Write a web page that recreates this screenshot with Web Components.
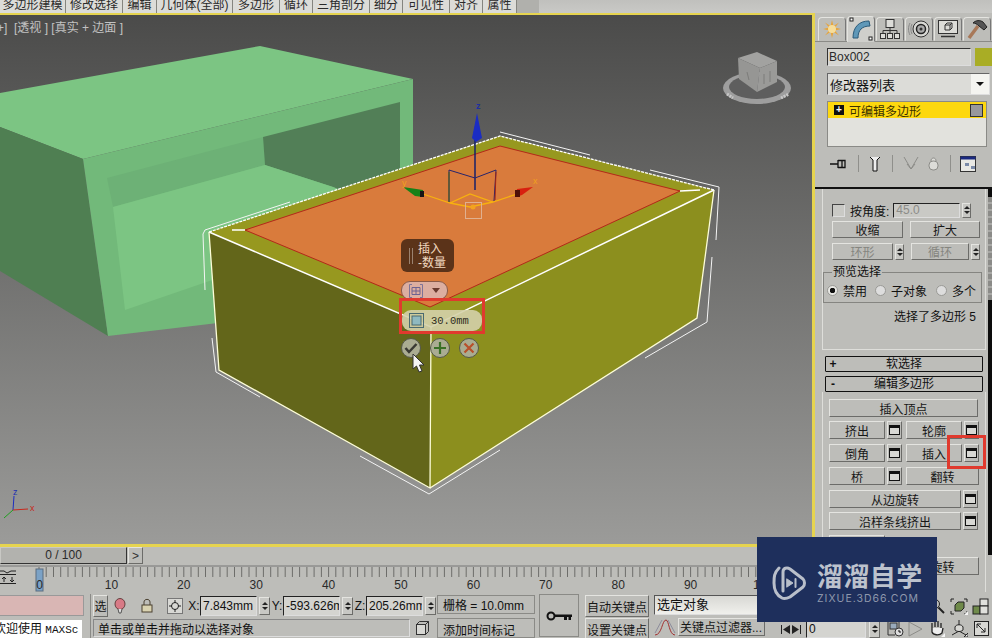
<!DOCTYPE html>
<html>
<head>
<meta charset="utf-8">
<style>
  html, body { margin: 0; height: 638px; overflow: hidden; background: #bdbdb9; }
  body { font: 12px "Liberation Sans", "Noto Sans CJK SC", sans-serif; color: #111; }
  #app { display: grid; grid-template-columns: 815px 177px; grid-template-rows: 13px 579px 46px; width: 992px; height: 638px; position: relative; overflow: hidden; }
  ribbon-tabs { grid-column: 1 / 3; }
  status-bar { grid-column: 1 / 3; }
</style>
</head>
<body>
<div id="app">
  <ribbon-tabs></ribbon-tabs>
  <div id="left" style="display:flex;flex-direction:column;min-width:0">
    <scene-view></scene-view>
    <time-line></time-line>
  </div>
  <command-panel></command-panel>
  <status-bar></status-bar>
  <zixue-mark></zixue-mark>
</div>

<script>
class MxBtn extends HTMLElement {
  constructor() {
    super();
    this.attachShadow({ mode: "open" }).innerHTML = `
    <style>
      :host { display: flex; align-items: center; justify-content: center; box-sizing: border-box; height: 18px;
        background: #bdbdb9; border: 1px solid; border-color: #e4e4e0 #6c6c69 #6c6c69 #e4e4e0;
        font-size: 12px; color: #161616; white-space: nowrap; overflow: hidden; flex: none; }
      :host([disabled]) { color: #85857f; }
    </style><slot></slot>`;
  }
}

class MxOpt extends HTMLElement {
  constructor() {
    super();
    this.attachShadow({ mode: "open" }).innerHTML = `
    <style>
      :host { display: flex; align-items: center; justify-content: center; box-sizing: border-box; width: 15px; height: 18px; flex: none;
        background: #bdbdb9; border: 1px solid; border-color: #e4e4e0 #6c6c69 #6c6c69 #e4e4e0; }
      i { display: block; box-sizing: border-box; width: 11px; height: 10px; border: 1px solid #111; border-top-width: 3px; background: #d8d8d4; }
    </style><i></i>`;
  }
}

class MxSpin extends HTMLElement {
  constructor() {
    super();
    this.attachShadow({ mode: "open" }).innerHTML = `
    <style>
      :host { display: flex; flex-direction: column; box-sizing: border-box; width: 9px; height: 16px; flex: none; background: #c8c8c4;
        border: 1px solid; border-color: #e4e4e0 #6c6c69 #6c6c69 #e4e4e0; align-items: center; justify-content: center; gap: 2px; }
      i { width: 0; height: 0; border-left: 3px solid transparent; border-right: 3px solid transparent; }
      .u { border-bottom: 3px solid #222; }
      .d { border-top: 3px solid #222; }
    </style><i class="u"></i><i class="d"></i>`;
  }
}

class RolloutBar extends HTMLElement {
  constructor() {
    super();
    this.attachShadow({ mode: "open" }).innerHTML = `
    <style>
      :host { display: grid; grid-template-columns: 14px 1fr 14px; align-items: center; box-sizing: border-box; height: 16px; margin: 0 3px;
        border: 1px solid #111; border-radius: 1px; background: #bdbdb9; font-size: 12px; line-height: 14px; }
      b { text-align: center; font-size: 12px; }
      div { text-align: center; }
    </style><b></b><div><slot></slot></div><span></span>`;
    this.shadowRoot.querySelector("b").textContent = this.getAttribute("sign");
  }
}

class RibbonTabs extends HTMLElement {
  constructor() {
    super();
    const names = [["多边形建模", 66], ["修改选择", 57], ["编辑", 34], ["几何体(全部)", 76], ["多边形", 47], ["循环", 33], ["三角剖分", 57], ["细分", 33], ["可见性", 47], ["对齐", 33], ["属性", 34]];
    this.attachShadow({ mode: "open" }).innerHTML = `
    <style>
      :host { display: flex; height: 13px; overflow: hidden; background: linear-gradient(#c0c0bd, #c9c9c6); }
      span { box-sizing: border-box; display: block; height: 13px; background: #dcdcd8; border-right: 1px solid #85857f; text-align: center;
        font-size: 12px; line-height: 10px; color: #2a2a2a; white-space: nowrap; }
      .end { width: 22px; background: #b0b0ac; border: 0; }
    </style>
    ${names.map(([n, w]) => `<span style="width:${w}px">${n}</span>`).join("")}<span class="end"></span>`;
  }
}

class SceneView extends HTMLElement {
  constructor() {
    super();
    this.attachShadow({ mode: "open" }).innerHTML = `
    <style>
      :host { display: block; position: relative; box-sizing: border-box; height: 534px; overflow: hidden;
        border: solid #e6d44f; border-width: 2px 3px 3px 0; background: linear-gradient(#4b4b4a, #9b9b99); }
      .label { height: 26px; line-height: 26px; color: #c2c2c2; font-size: 12px; white-space: pre; text-indent: -3px; position: relative; }
      svg.scene { position: absolute; left: 0; top: 0; }
      svg text { font-family: "Liberation Sans", sans-serif; }
      .cursor { position: absolute; left: 412px; top: 338px; }
    </style>
    <svg class="scene" width="812" height="529" viewBox="0 15 812 529">
      <!-- back box, green -->
      <polygon points="0,93 260,46 413,79 83,159 0,127" fill="#7cc583"/>
      <polygon points="0,127 83,159 108,336 0,271" fill="#4f7f52"/>
      <polygon points="83,159 413,79 413,300 108,336" fill="#72b97a"/>
      <polygon points="107,178 263,137 265,165 113,207" fill="#6db176"/>
      <polygon points="263,137 400,102 400,215 333,187 265,165" fill="#527f57"/>
      <polygon points="113,207 265,165 333,187 400,215 300,250 125,310" fill="#7cc583"/>
      <!-- selected box -->
      <polygon points="209,232 500,136 714,190 431,327" fill="#97981f"/>
      <polygon points="245,230 500,146 680,191 430,307" fill="#d97b3c" stroke="#b3281a"/>
      <polygon points="209,232 431,327 430,488 219,370" fill="#63661a"/>
      <polygon points="714,190 431,327 430,488 697,318" fill="#8c8f1e"/>
      <g fill="none" stroke="#fff" stroke-width="1.3">
        <path d="M209,232 L431,327 L714,190" stroke-width="1.5"/>
        <path d="M431,327 L430,488 L219,370 L209,232 M430,488 L697,318 L714,190" stroke="#fdfdd8"/>
        <path d="M209,232 L500,136 L714,190" stroke-dasharray="3 1"/>
        <path d="M232,230 L245,230 M680,191 L700,190"/>
      </g>
      <g fill="none" stroke="#f4f4f4" stroke-width="1">
        <path d="M205,290 L203,234 L205,230 L290,202"/>
        <path d="M500,132 L590,155 M716,240 L719,187 L650,170"/>
        <path d="M712,257 L707,322 L645,358"/>
        <path d="M360,456 L429,494 L500,450"/>
        <path d="M212,338 L216,372 L260,397"/>
      </g>
      <!-- gizmo -->
      <path d="M475,140 V190" stroke="#16206a" stroke-width="1.5"/>
      <polygon points="477,113 472,138 476,142 482,138" fill="#1a2cc4"/>
      <text x="476" y="109" font-size="9" fill="#2030a0" font-weight="bold">z</text>
      <path d="M449,202 V170 L475,178 L496,170 L494,201" fill="none" stroke="#26246c"/>
      <path d="M449,202 V172" stroke="#44601c"/>
      <path d="M495,200 L496,172" stroke="#a12416"/>
      <path d="M423,194 L450,203 L470,194 L493,202 L517,194 M450,203 L470,207 L493,202" fill="none" stroke="#f7b10f" stroke-width="1.3"/>
      <polygon points="403,187 423,190 423,197 415,196" fill="#178118"/>
      <rect x="420" y="191" width="4" height="6" fill="#161616"/>
      <polygon points="533,187 517,189 516,197 522,195" fill="#d8200f"/>
      <rect x="515" y="190" width="5" height="7" fill="#501008"/>
      <text x="402" y="186" font-size="9" fill="#f0a020">y</text>
      <text x="533" y="184" font-size="9" fill="#f0a020">x</text>
      <rect x="465.500" y="202.500" width="16" height="16" fill="none" stroke="#e0b090"/>
      <circle cx="473" cy="207" r="2.500" fill="#f3a21f"/>
      <!-- view cube -->
      <ellipse cx="757" cy="88" rx="34" ry="16" fill="#9e9e9e"/>
      <ellipse cx="757" cy="87" rx="28" ry="12" fill="#5e5e5e"/>
      <path d="M727,94 L733,98 M781,98 L789,94" stroke="#c8c8c8" stroke-width="3" stroke-dasharray="2 1"/>
      <polygon points="738,58 757,52 777,61 760,68" fill="#a2a2a0"/>
      <polygon points="738,58 760,68 757,92 739,79" fill="#969694"/>
      <polygon points="777,61 760,68 757,92 777,82" fill="#9a9a98"/>
      <path d="M747,72 L749,80 M764,74 V84 M770,71 V82" stroke="#7c7c7a"/>
      <!-- world axis -->
      <path d="M13,510 L14,496" stroke="#1c2ec0"/>
      <path d="M13,510 L28,509" stroke="#c8281c"/>
      <path d="M13,510 L4,518" stroke="#20a020"/>
      <text x="13" y="495" font-size="9" fill="#2030b0">z</text>
      <text x="30" y="511" font-size="9" fill="#c8281c">x</text>
    </svg>
    <div class="label">+]  [透视 ] [真实 + 边面 ]</div>
    <caddy-widget></caddy-widget>
    <svg class="cursor" width="14" height="20" viewBox="0 0 14 20"><path d="M1,1 V16 L4.500,13 L7,19 L10,18 L7.500,12 H12 Z" fill="#f4f4f4" stroke="#333"/></svg>`;
  }
}

class CaddyWidget extends HTMLElement {
  constructor() {
    super();
    this.attachShadow({ mode: "open" }).innerHTML = `
    <style>
      :host { position: absolute; left: 399px; top: 224px; display: flex; flex-direction: column; width: 86px; }
      .tip { margin-left: 2px; width: 53px; height: 33px; box-sizing: border-box; background: #5b3319; border-radius: 6px; display: flex; align-items: center;
        padding-left: 8px; gap: 5px; color: #f2d9c0; font-size: 12px; line-height: 14px; }
      .tip i { width: 2px; height: 16px; border: solid #9a8270; border-width: 0 1px; }
      .pill { margin: 9px 0 0 2px; width: 47px; height: 19px; box-sizing: border-box; border-radius: 9px; background: #dcaea0; border: 1px solid #8a5a48;
        display: flex; align-items: center; gap: 9px; padding-left: 7px; }
      .frame { margin-top: -2px; height: 36px; box-sizing: border-box; border: 3px solid #e03a2e; padding-top: 9px; position: relative; }
      .val { height: 21px; box-sizing: border-box; border-radius: 9px; background: rgba(212,208,170,.9); display: flex; align-items: center; gap: 7px; padding-left: 7px;
        font: 10.500px "Liberation Mono", monospace; color: #2d2d20; }
      .acts { display: flex; gap: 9px; margin: 4px 0 0 2px; }
      .acts div { width: 20px; height: 20px; box-sizing: border-box; border-radius: 50%; background: #aaac92; border: 1px solid #55584a; display: flex; align-items: center; justify-content: center; }
    </style>
    <div class="tip"><i></i><div>插入<br>-数量</div></div>
    <div class="pill">
      <svg width="14" height="14" viewBox="0 0 14 14"><path d="M3,.5 H.5 V13.500 H3 M11,.5 H13.500 V13.500 H11" fill="none" stroke="#7d7397"/><path d="M3,3.500 H11 V10.500 H3 Z M7,3.500 V10.500 M3,7 H11" fill="none" stroke="#6d6390"/></svg>
      <svg width="8" height="5" viewBox="0 0 8 5"><path d="M0,0 H8 L4,5 Z" fill="#6a3a2e"/></svg>
    </div>
    <div class="frame"><div class="val">
      <svg width="15" height="15" viewBox="0 0 15 15"><rect x=".5" y=".5" width="14" height="14" fill="none" stroke="#4a6a70"/><rect x="3" y="3" width="9" height="9" fill="#8fb9c0" stroke="#4a6a70"/></svg>
      <span>30.0mm</span></div></div>
    <div class="acts">
      <div><svg width="14" height="12" viewBox="0 0 14 12"><path d="M1.500,6 L5,10 L12.500,2" fill="none" stroke="#3a3a34" stroke-width="2.500"/></svg></div>
      <div><svg width="14" height="14" viewBox="0 0 14 14"><path d="M7,1 V13 M1,7 H13" stroke="#3a7026" stroke-width="2.200"/></svg></div>
      <div><svg width="12" height="12" viewBox="0 0 12 12"><path d="M1.500,1.500 L10.500,10.500 M10.500,1.500 L1.500,10.500" stroke="#b8502a" stroke-width="2.200"/></svg></div>
    </div>`;
  }
}

class TimeLine extends HTMLElement {
  constructor() {
    super();
    let ticks = "";
    for (let i = 0; i <= 108; i++) {
      const x = 39 + i * 7.24;
      ticks += `M${x.toFixed(1)},3 V13 `;
    }
    let labels = "";
    for (let n = 10; n <= 100; n += 10) {
      labels += `<text x="${39 + n * 7.24}" y="25" text-anchor="middle">${n}</text>`;
    }
    this.attachShadow({ mode: "open" }).innerHTML = `
    <style>
      :host { display: block; height: 45px; background: #bdbdb9; }
      .slide { display: flex; height: 17px; }
      .track { box-sizing: border-box; width: 127px; height: 17px; background: #b2b2ae; border: 1px solid; border-color: #c8c8c4 #333 #333 #c8c8c4; text-align: center; line-height: 15px; font-size: 12px; color: #2a2a2a; }
      mx-btn { width: 15px; height: 17px; margin-left: 1px; color: #333; }
      svg { display: block; }
      svg text { font: 12px "Liberation Sans", sans-serif; fill: #2a2a2a; }
    </style>
    <div class="slide"><div class="track">0 / 100</div><mx-btn>&gt;</mx-btn></div>
    <svg width="815" height="28" viewBox="0 0 815 28">
      <path d="M0,2 H815" stroke="#777"/>
      <path d="${ticks}" stroke="#6d6d6a" fill="none"/>
      <rect x="36" y="5" width="7" height="22" fill="#7ba2c6" stroke="#5a6d80"/>
      <text x="39.500" y="25" text-anchor="middle">0</text>
      ${labels}
      <path d="M0,7 H4 L7,9 L11,7 H16 M0,10.500 H16 M0,19.500 H16 M4,18 V13 M2,15 L4,13 L6,15 M12,13 V18 M10,16 L12,18 L14,16" fill="none" stroke="#222"/>
    </svg>`;
  }
}

class CommandPanel extends HTMLElement {
  constructor() {
    super();
    this.attachShadow({ mode: "open" }).innerHTML = `
    <style>
      :host { display: block; height: 579px; overflow: hidden; background: #bdbdb9; font-size: 12px; box-sizing: border-box; padding-top: 4px; }
      .tabs { display: flex; height: 24px; padding-left: 3px; gap: 1px; border-bottom: 1px solid #8a8a86; box-sizing: content-box; }
      .tabs div { width: 28px; height: 24px; box-sizing: border-box; border: 1px solid; border-color: #e4e4e0 #777 transparent #e4e4e0; border-radius: 4px 4px 0 0; display: flex; align-items: center; justify-content: center; background: #bdbdb9; }
      .tabs div.on { background: #cfcfcb; margin-top: -1px; height: 26px; }
      .name { display: flex; margin: 6px 0 0 12px; gap: 4px; }
      .name div { box-sizing: border-box; width: 145px; height: 18px; background: #d6d6d2; border: 1px solid; border-color: #333 #ddd #ddd #333; line-height: 16px; padding-left: 1px; color: #2a2a2a; }
      .name i { width: 17px; height: 18px; background: #a9ad25; }
      .drop { display: flex; margin: 7px 0 0 12px; width: 163px; height: 22px; box-sizing: border-box; border: 1px solid; border-color: #666 #ddd #ddd #666; background: #dcdcd8; align-items: center; }
      .drop span { flex: 1; padding-left: 2px; font-size: 13px; }
      .drop b { width: 18px; height: 20px; background: #f4f4f0; display: flex; align-items: center; justify-content: center; }
      .drop b::after { content: ""; border: 4px solid transparent; border-top: 4px solid #111; border-bottom: 0; }
      .stack { margin: 6px 0 0 12px; width: 160px; height: 46px; box-sizing: border-box; background: #e2e2dd; border: 1px solid #8a8a86; }
      .sel { display: flex; align-items: center; height: 16px; background: #fdd80f; color: #3a3000; padding-left: 6px; gap: 5px; }
      .sel i { width: 10px; height: 10px; background: #111; color: #fff; font: bold 10px/10px "Liberation Sans", sans-serif; text-align: center; }
      .sel span { flex: 1; }
      .sel em { width: 11px; height: 11px; margin-right: 3px; background: #98989c; border: 1px solid #333; }
      .tools { display: flex; align-items: center; margin: 8px 0 0 15px; height: 17px; width: 155px; }
      .tools u { width: 1px; height: 17px; background: #8f8f8b; }
      .rule { margin-top: 15px; height: 2px; background: #111; }
      .scroll { display: flex; }
      .body { width: 164px; margin-left: 7px; flex: none; }
      .bar { margin-left: 2px; width: 4px; height: 366px; background: #0c0c0c; padding-top: 8px; box-sizing: border-box; }
      .bar i { display: block; height: 103px; background: repeating-linear-gradient(#8b8b88 0 5px, #a8a8a5 5px 7px); }
      .box1 { box-sizing: border-box; height: 161px; border: 1px solid #dededa; border-top: 0; padding: 14px 5px 0 9px; }
      .row { display: flex; align-items: center; }
      .cb { box-sizing: border-box; width: 13px; height: 13px; border: 1px solid; border-color: #444 #ddd #ddd #444; background: #c9c9c5; margin-right: 5px; }
      .val { box-sizing: border-box; width: 67px; height: 15px; margin: 0 2px 0 4px; border: 1px solid; border-color: #222 #ddd #ddd #222; background: #c9c9c5; color: #8c8c88; line-height: 13px; padding-left: 2px; }
      fieldset { margin: 4px 0 0 -9px; width: 159px; box-sizing: border-box; padding: 2px 0 5px 3px; border: 1px solid #858581; }
      legend { padding: 0 1px; margin-left: 5px; line-height: 17px; }
      .rad { display: flex; align-items: center; height: 14px; white-space: nowrap; }
      .rad span { flex: none; }
      .rad i { box-sizing: border-box; width: 11px; height: 11px; border-radius: 50%; background: #ddd; border: 1px solid #9a9a96; margin-right: 5px; flex: none; }
      .rad i.on { background: radial-gradient(#111 0 2.500px, #e8e8e4 3px); }
      .info { margin-top: 6px; text-align: right; padding-right: 4px; line-height: 16px; }
      rollout-bar { margin-top: 4px; }
      .box2 { box-sizing: border-box; height: 240px; border: 1px solid #dededa; border-top: 0; padding: 7px 0 0 6px; }
      .box2 .row { gap: 2px; margin-top: 5px; }
      .box2 .row mx-btn { width: 56px; }
      .box2 .row mx-opt + mx-btn { margin-left: 2px; }
      .box2 .full { width: 149px; }
    </style>
    <div class="tabs">
      <div><svg width="20" height="20" viewBox="0 0 20 20"><path d="M10,1 L11.500,7 L17,3.500 L13,8.500 L19,10 L13,11.500 L17,16.500 L11.500,13 L10,19 L8.500,13 L3,16.500 L7,11.500 L1,10 L7,8.500 L3,3.500 L8.500,7 Z" fill="#e6a43c"/><circle cx="10" cy="10" r="4" fill="#f7dd9a"/></svg></div>
      <div class="on"><svg width="24" height="24" viewBox="0 0 24 24"><path d="M4,21 C4,10 10,4 20,4 L21,9 C13,9 9,13 9,21 Z" fill="#5f98b8" stroke="#2c5a78"/><rect x="1" y="1" width="3" height="3" fill="#fff" stroke="#222"/><rect x="20" y="20" width="3" height="3" fill="#fff" stroke="#222"/></svg></div>
      <div><svg width="22" height="22" viewBox="0 0 22 22" fill="#dcdcd8" stroke="#333"><rect x="7" y="1.500" width="8" height="8"/><rect x="1.500" y="15.500" width="5" height="5"/><rect x="8.500" y="15.500" width="5" height="5"/><rect x="15.500" y="15.500" width="5" height="5"/><path d="M11,9.500 V15.500 M4,15.500 V12.500 H18 V15.500" fill="none"/></svg></div>
      <div><svg width="24" height="20" viewBox="0 0 24 20"><path d="M3,4 C1,8 1,12 3,16 M5,5 C3.500,8 3.500,12 5,15" fill="none" stroke="#888"/><circle cx="14" cy="10" r="8" fill="#d8d8d4" stroke="#333"/><circle cx="14" cy="10" r="4.500" fill="#aaa" stroke="#222" stroke-width="1.500"/><circle cx="14" cy="10" r="1.500" fill="#333"/></svg></div>
      <div><svg width="22" height="20" viewBox="0 0 22 20" fill="none" stroke="#333"><rect x="1.500" y="1.500" width="19" height="13" fill="#dcdcd8"/><path d="M8,11 V6 L10,4 H15 V9 L13,11 Z M8,6 H13 V11 M13,6 L15,4"/><path d="M4,17.500 H18" stroke-width="1.500"/></svg></div>
      <div><svg width="22" height="22" viewBox="0 0 22 22"><path d="M3,20 L12,8" stroke="#a87858" stroke-width="3.500"/><path d="M7,5 C10,2 14,2 17,4 L21,9 L18,12 L13,8 C11,6 9,5 7,5 Z" fill="#555" stroke="#222"/></svg></div>
    </div>
    <div class="name"><div>Box002</div><i></i></div>
    <div class="drop"><span>修改器列表</span><b></b></div>
    <div class="stack"><div class="sel"><i>+</i><span>可编辑多边形</span><em></em></div></div>
    <div class="tools">
      <svg width="18" height="14" viewBox="0 0 18 14" fill="none" stroke="#111"><path d="M0,7 H8 M8,3 V11 M8,3.500 H15 V10.500 H8 M12,3.500 V10.500" stroke-width="1.300"/></svg>
      <u style="margin-left:10px"></u>
      <svg style="margin-left:10px" width="12" height="17" viewBox="0 0 12 17"><path d="M1,2 L4,5 V16 H8 V5 L11,2" fill="#eee" stroke="#111"/></svg>
      <u style="margin-left:11px"></u>
      <svg style="margin-left:10px" width="16" height="15" viewBox="0 0 16 15" fill="none" stroke="#8c8c88"><path d="M1,1 L8,13 L15,1 M4,8 L8,13 L12,8"/></svg>
      <svg style="margin-left:9px" width="11" height="15" viewBox="0 0 11 15" fill="#dcdcd8" stroke="#8c8c88"><path d="M3,5 C3,1 8,1 8,5"/><rect x="1" y="5" width="9" height="9" rx="4"/></svg>
      <u style="margin-left:11px"></u>
      <svg style="margin-left:9px" width="17" height="16" viewBox="0 0 17 16"><rect x=".5" y=".5" width="15" height="15" fill="#e8e8e4" stroke="#333"/><rect x=".5" y=".5" width="15" height="3" fill="#1b2a80"/><path d="M5,7 H9 V10 H5 Z M11,10 H15 V13 H11 Z" fill="#7a8aa8"/></svg>
    </div>
    <div class="rule"></div>
    <div class="scroll">
      <div class="body">
        <div class="box1">
          <div class="row" style="height:14px"><i class="cb"></i><span>按角度:</span><div class="val">45.0</div><mx-spin style="height:15px"></mx-spin></div>
          <div class="row" style="margin-top:4px;gap:7px"><mx-btn style="width:71px;height:17px">收缩</mx-btn><mx-btn style="width:70px;height:17px">扩大</mx-btn></div>
          <div class="row" style="margin-top:5px;gap:2px"><mx-btn disabled style="width:61px;height:17px">环形</mx-btn><mx-spin></mx-spin><mx-btn disabled style="width:58px;height:17px;margin-left:5px">循环</mx-btn><mx-spin></mx-spin></div>
          <fieldset><legend>预览选择</legend>
            <div class="rad"><i class="on"></i><span>禁用</span><i style="margin-left:8px"></i><span>子对象</span><i style="margin-left:9px"></i><span>多个</span></div>
          </fieldset>
          <div class="info">选择了多边形 5</div>
        </div>
        <rollout-bar sign="+" style="margin-top:6px">软选择</rollout-bar>
        <rollout-bar sign="-">编辑多边形</rollout-bar>
        <div class="box2">
          <mx-btn class="full">插入顶点</mx-btn>
          <div class="row" style="margin-top:4px"><mx-btn>挤出</mx-btn><mx-opt></mx-opt><mx-btn>轮廓</mx-btn><mx-opt></mx-opt></div>
          <div class="row"><mx-btn>倒角</mx-btn><mx-opt></mx-opt><mx-btn>插入</mx-btn><mx-opt></mx-opt></div>
          <div class="row"><mx-btn>桥</mx-btn><mx-opt></mx-opt><mx-btn style="width:73px">翻转</mx-btn></div>
          <div class="row"><mx-btn style="width:132px">从边旋转</mx-btn><mx-opt></mx-opt></div>
          <div class="row" style="margin-top:4px"><mx-btn style="width:132px">沿样条线挤出</mx-btn><mx-opt></mx-opt></div>
          <div class="row"><mx-btn class="full"></mx-btn></div>
          <div class="row" style="margin-top:4px"><mx-btn style="width:75px"></mx-btn><mx-btn style="width:73px">旋转</mx-btn></div>
        </div>
      </div>
      <div class="bar"><i></i></div>
    </div>
    <red-mark></red-mark>`;
  }
}

// the hand-drawn red box on the 插入 option button
class RedMark extends HTMLElement {
  constructor() {
    super();
    this.attachShadow({ mode: "open" }).innerHTML = `
    <style>:host { position: absolute; left: 947px; top: 435px; width: 39px; height: 34px; box-sizing: border-box; border: 3px solid #e03a2e; }</style>`;
  }
}

class StatusBar extends HTMLElement {
  constructor() {
    super();
    // small white flyout corner for the nav buttons
    const fly = (x, y) => `<path d="M${x},${y} h-4 l4,-4 Z" fill="#f4f4f4"/>`;
    this.attachShadow({ mode: "open" }).innerHTML = `
    <style>
      :host { display: flex; height: 46px; overflow: hidden; background: #bdbdb9; font-size: 12px; padding-top: 2px; box-sizing: border-box; white-space: nowrap; }
      .col { display: flex; flex-direction: column; flex: none; }
      .pink { width: 84px; height: 21px; margin-top: 1px; background: #d9b6b4; border: 1px solid #999; box-sizing: border-box; border-left: 0; }
      .welcome { width: 82px; height: 18px; margin-top: 4px; background: #fff; line-height: 18px; overflow: hidden; text-indent: -6px; }
      .welcome span { font: 11px "Liberation Mono", monospace; }
      .sep { width: 1px; background: #8a8a86; margin-left: 6px; margin-right: 2px; flex: none; }
      .r1 { display: flex; align-items: center; height: 23px; }
      .r2 { display: flex; align-items: center; height: 18px; margin-top: 2px; }
      .lbl { width: 12px; text-align: center; flex: none; margin-left: 1px; }
      .in { box-sizing: border-box; width: 57px; height: 20px; background: #d4d4d0; border: 1px solid; border-color: #222 #ddd #ddd #222; line-height: 18px; padding-left: 2px; overflow: hidden; flex: none; }
      mx-spin { width: 11px; height: 18px; margin-left: 2px; }
      .msg { box-sizing: border-box; width: 317px; height: 18px; border: 1px solid; border-color: #888 #ddd #ddd #888; line-height: 21px; padding-left: 4px; font-size: 12px; overflow: hidden; }
      .flat { box-sizing: border-box; width: 98px; height: 20px; border: 1px solid #8a8a86; display: flex; align-items: center; padding-left: 5px; margin-left: 2px; background: #bdbdb9; }
      .key { margin-left: 4px; width: 40px; height: 43px; box-sizing: border-box; border: 1px solid #8a8a86; display: flex; align-items: center; justify-content: center; flex: none; }
      .auto { margin-left: 6px; width: 64px; }
      .auto mx-btn { width: 64px; height: 22px; margin-top: 1px; }
      .sel { box-sizing: border-box; width: 112px; height: 20px; margin: 1px 0 0 5px; background: linear-gradient(#d8d8d4, #f0f0ec); border: 1px solid; border-color: #555 #ddd #ddd #555; padding-left: 2px; line-height: 18px; font-size: 13px; }
      .filter { margin: 2px 0 0 5px; display: flex; align-items: center; height: 19px; }
      .filter mx-btn { width: 87px; height: 18px; font-size: 12px; margin-left: 2px; justify-content: flex-start; padding-left: 1px; }
      .tc { display: flex; align-items: center; margin: 26px 0 0 15px; height: 18px; }
      .tc mx-spin { height: 17px; margin-left: 3px; }
      .num { box-sizing: border-box; width: 60px; height: 17px; margin-left: 5px; background: #d4d4d0; border: 1px solid; border-color: #222 #ddd #ddd #222; line-height: 15px; padding-left: 2px; }
      .nav { display: grid; grid-template-columns: 20px 20px 24px 20px 24px; grid-auto-rows: 18px; row-gap: 4px; align-items: center; justify-items: center; margin: 3px 0 0 5px; flex: none; }
    </style>
    <div class="col"><div class="pink"></div><div class="welcome">欢迎使用 <span>MAXSc</span></div></div>
    <div class="sep"></div>
    <div class="col">
      <div class="r1">
        <mx-btn style="width:15px;height:22px">选</mx-btn>
        <svg style="margin-left:6px" width="12" height="16" viewBox="0 0 12 16"><ellipse cx="6" cy="6" rx="5" ry="5.500" fill="#d87a86" stroke="#66403f"/><path d="M4,11 L5,15 H7 L8,11" fill="#ddd" stroke="#555"/></svg>
        <svg style="margin-left:15px" width="12" height="15" viewBox="0 0 12 15" fill="none" stroke="#4a4030"><path d="M3,7 V4 C3,0.500 9,0.500 9,4 V7"/><rect x="1" y="7" width="10" height="7" fill="#d9d2b0"/></svg>
        <svg style="margin-left:14px" width="16" height="16" viewBox="0 0 16 16" fill="none" stroke="#222"><rect x=".5" y=".5" width="15" height="15" fill="#d8d8d4" stroke="#777"/><circle cx="8" cy="8" r="3.500"/><path d="M8,2 V5 M8,11 V14 M2,8 H5 M11,8 H14"/></svg>
        <span class="lbl" style="margin-left:5px">X:</span><div class="in">7.843mm</div><mx-spin></mx-spin>
        <span class="lbl">Y:</span><div class="in">-593.626m</div><mx-spin></mx-spin>
        <span class="lbl">Z:</span><div class="in">205.26mm</div><mx-spin></mx-spin>
      </div>
      <div class="r2"><div class="msg">单击或单击并拖动以选择对象</div>
        <svg style="margin-left:6px" width="13" height="14" viewBox="0 0 13 14" fill="#d8d8d4" stroke="#333"><rect x=".5" y="3.500" width="9" height="10"/><path d="M.5,3.500 L3.500,.5 H12.500 V10.500 L9.500,13.500 M9.500,3.500 L12.500,.5" fill="none"/></svg>
      </div>
    </div>
    <div class="col" style="margin-left:-1px">
      <div class="flat" style="margin-top:1px">栅格 = 10.0mm</div>
      <div class="flat" style="margin-top:4px;height:20px;padding-top:3px">添加时间标记</div>
    </div>
    <div class="key"><svg width="26" height="10" viewBox="0 0 26 10"><circle cx="5" cy="5" r="3.500" fill="none" stroke="#111" stroke-width="2"/><path d="M8,3.500 H26 V6 H8 Z M18,6 H21 V9 H18 Z M22.500,6 H25 V9 H22.500 Z" fill="#111"/></svg></div>
    <div class="col auto"><mx-btn>自动关键点</mx-btn><mx-btn>设置关键点</mx-btn></div>
    <div class="col">
      <div class="sel">选定对象</div>
      <div class="filter"><svg width="22" height="18" viewBox="0 0 22 18" fill="none"><path d="M1,17 C8,17 8,2 12,2 C15,2 15,17 21,17" stroke="#a13030"/><path d="M1,15 L8,2 M14,2 L21,15" stroke="#8c8c9c"/></svg><mx-btn>关键点过滤器...</mx-btn></div>
    </div>
    <div class="col"><div class="tc">
      <svg width="20" height="9" viewBox="0 0 20 9" fill="#222"><path d="M0,0 H1 V9 H0 Z M9,0 V9 L2,4.500 Z M11,0 V9 L18,4.500 Z M19,0 H20 V9 H19 Z"/></svg>
      <div class="num">0</div><mx-spin></mx-spin>
    </div></div>
    <div class="nav">
      <span></span><span></span>
      <svg width="16" height="16" viewBox="0 0 16 16" fill="none" stroke="#222"><circle cx="6" cy="6" r="4.500"/><path d="M9.500,9.500 L15,15" stroke-width="2"/></svg>
      <svg width="18" height="17" viewBox="0 0 18 17" fill="none"><path d="M1,4 V1 H4 M14,1 H17 V4 M17,13 V16 H14 M4,16 H1 V13" stroke="#222"/><path d="M5,7 L8,4 H14 V10 L11,13 H5 Z" fill="#6f8a4a" stroke="#222"/>${fly(18, 17)}</svg>
      <svg width="18" height="17" viewBox="0 0 18 17" stroke="#222"><rect x="8" y="1" width="8" height="7" fill="#e0e0dc"/><rect x="1" y="8" width="7" height="8" fill="#6f8a4a"/><rect x="8" y="8" width="8" height="8" fill="#e0e0dc"/></svg>
      <svg width="17" height="17" viewBox="0 0 17 17"><path d="M1,1 H12 V8 M1,1 V15 H8" fill="none" stroke="#333"/><rect x="3" y="3" width="7" height="6" fill="#9ab" stroke="#333"/><circle cx="12" cy="12" r="4" fill="#ddd" stroke="#333"/><path d="M12,10 V12 H14" fill="none" stroke="#111"/></svg>
      <svg width="17" height="17" viewBox="0 0 17 17"><path d="M2,2 L15,9 L2,16 Z" fill="none" stroke="#8c8c88"/></svg>
      <svg width="16" height="18" viewBox="0 0 16 18"><path d="M3,9 V4 M6,8 V2 M9,8 V2 M12,9 V4 M3,9 L3,13 C4,16 10,17 13,14 L14,9" fill="#eee" stroke="#222" stroke-width="1.300"/>${fly(16, 18)}</svg>
      <svg width="18" height="18" viewBox="0 0 18 18" fill="none" stroke="#222"><path d="M9,1 V12 L2,16 M9,12 L16,16"/><path d="M5,8 C6,5 12,5 13,8 L13,11 C11,13 7,13 5,11 Z" fill="#d8d8d4"/>${fly(18, 18)}</svg>
      <svg width="15" height="15" viewBox="0 0 15 15" fill="none" stroke="#222"><rect x=".5" y=".5" width="14" height="14" fill="#d8d8d4"/><path d="M3,3 L11,11 M3,3 H7 M3,3 V7 M11,11 H7 M11,11 V7"/></svg>
    </div>`;
  }
}

class ZixueMark extends HTMLElement {
  constructor() {
    super();
    this.attachShadow({ mode: "open" }).innerHTML = `
    <style>
      :host { position: absolute; left: 757px; top: 537px; width: 180px; height: 85px; box-sizing: border-box; background: #1e2f5c; display: flex; align-items: center; gap: 11px; padding: 7px 0 0 15px; }
      .t { display: flex; flex-direction: column; }
      .cn { font: 700 26px/28px "Noto Sans CJK SC", sans-serif; color: #bcc2cd; white-space: nowrap; letter-spacing: .4px; }
      .en { font: 10.500px/12px "Inter", "Liberation Sans", sans-serif; color: #8f99ad; letter-spacing: 1px; white-space: nowrap; margin-top: 4px; }
    </style>
    <svg width="34" height="36" viewBox="0 0 34 36" fill="none" stroke="#b9bfca" stroke-width="3" stroke-linecap="round" stroke-linejoin="round">
      <path d="M7,3 C2,8 2,12 2,18 C2,25 4,30 10,33 C13,34.500 16,33 18,32 L31,22 C33,20 33,16 31,14 L18,4 C15,2 11,3 11,7 V26"/>
      <path d="M15,14 L21,18 L15,22 Z" fill="#b9bfca" stroke-width="1"/>
      <path d="M23.500,14 V22" stroke-width="2"/>
    </svg>
    <div class="t"><div class="cn">溜溜自学</div><div class="en">ZIXUE.3D66.COM</div></div>`;
  }
}

customElements.define("mx-btn", MxBtn);
customElements.define("mx-opt", MxOpt);
customElements.define("mx-spin", MxSpin);
customElements.define("rollout-bar", RolloutBar);
customElements.define("ribbon-tabs", RibbonTabs);
customElements.define("caddy-widget", CaddyWidget);
customElements.define("scene-view", SceneView);
customElements.define("time-line", TimeLine);
customElements.define("red-mark", RedMark);
customElements.define("command-panel", CommandPanel);
customElements.define("status-bar", StatusBar);
customElements.define("zixue-mark", ZixueMark);
</script>
</body>
</html>
